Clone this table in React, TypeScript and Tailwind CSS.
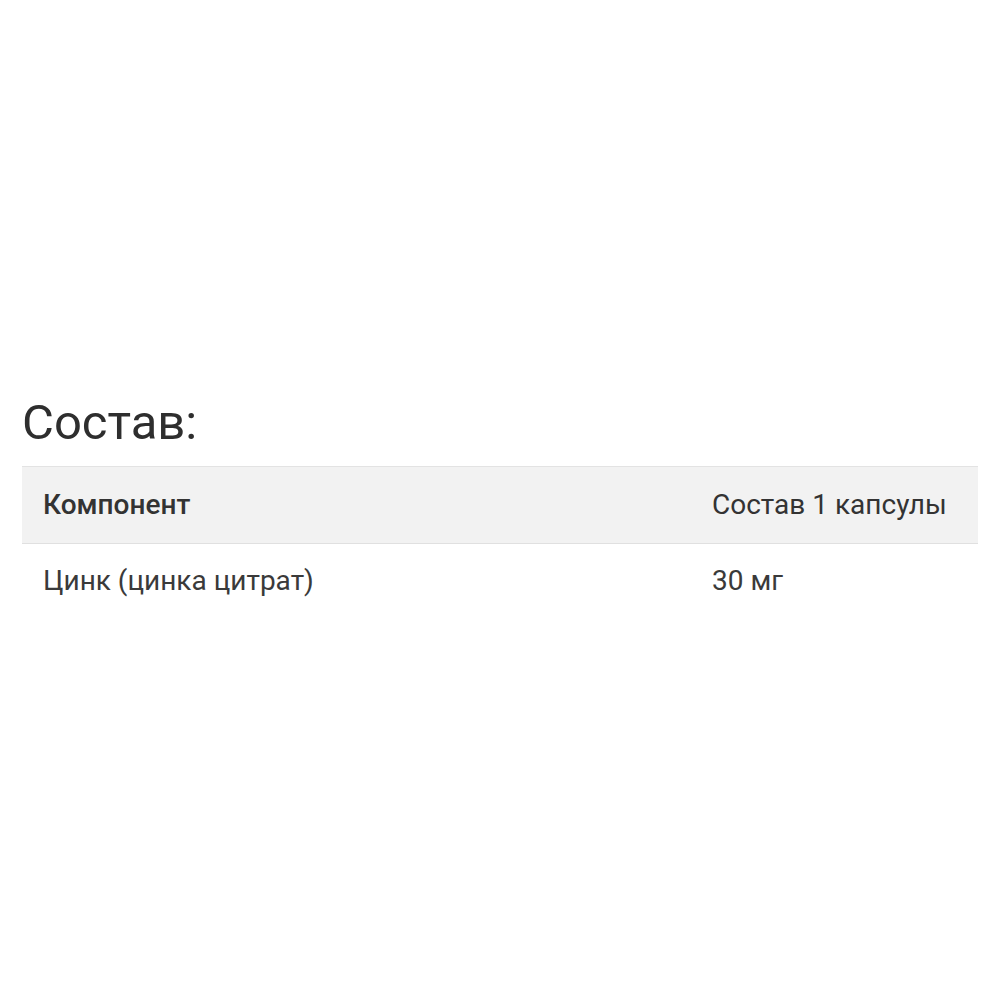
export default function App() {
  return (
    <div className="w-[1000px] h-[1000px] bg-white" style={{ fontFamily: 'Roboto, "Noto Sans", sans-serif' }}>
      <div className="pt-[393px] px-[22px]">
        <h2 className="text-[49px] leading-[60px] text-[#2e2e2e] font-normal">Состав:</h2>
        <div className="mt-[13px] border-t border-[#e3e3e3]">
          <div className="grid grid-cols-[669px_1fr] bg-[#f2f2f2] border-b border-[#e0e0e0] h-[77px] items-center text-[28px] text-[#333333]">
            <div className="pl-[21px] font-medium">Компонент</div>
            <div className="pl-[21px]">Состав 1 капсулы</div>
          </div>
          <div className="grid grid-cols-[669px_1fr] h-[74px] items-center text-[28px] text-[#3a3a3a]">
            <div className="pl-[21px]">Цинк (цинка цитрат)</div>
            <div className="pl-[21px]">30 мг</div>
          </div>
        </div>
      </div>
    </div>
  );
}
